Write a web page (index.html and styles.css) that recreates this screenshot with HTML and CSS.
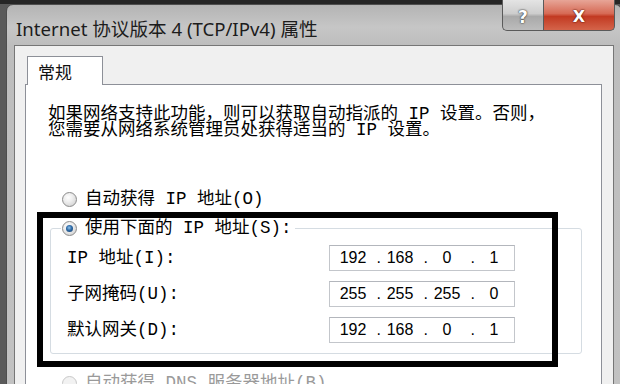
FILE: index.html
```html
<!DOCTYPE html>
<html lang="zh-CN">
<head>
  <meta charset="utf-8" />
  <title>Internet 协议版本 4 (TCP/IPv4) 属性</title>
  <link rel="stylesheet" href="styles.css">
</head>
<body>

  <div class="window">
    <!-- 标题栏 -->
    <div class="titlebar">
      <span class="title">Internet 协议版本 4 (TCP/IPv4) 属性</span>
      <div class="caption-buttons">
        <span class="btn-help">?</span>
        <span class="btn-close">X</span>
      </div>
    </div>

    <div class="client">
      <div class="tabs">
        <div class="tab">常规</div>
      </div>

      <div class="panel">
        <p class="intro">如果网络支持此功能，则可以获取自动指派的 IP 设置。否则，<br>您需要从网络系统管理员处获得适当的 IP 设置。</p>

        <div class="radio-row auto-ip">
          <span class="radio"></span>
          <span>自动获得 IP 地址(O)</span>
        </div>

        <fieldset class="group">
          <legend class="radio-row">
            <span class="radio checked"></span>
            <span>使用下面的 IP 地址(S):</span>
          </legend>
          <div class="rows">
            <span class="label">IP 地址(I):</span>
            <div class="ip-box">
              <span class="octet">192</span><span class="dot">.</span><span class="octet">168</span><span class="dot">.</span><span class="octet">0</span><span class="dot">.</span><span class="octet">1</span>
            </div>
            <span class="label">子网掩码(U):</span>
            <div class="ip-box">
              <span class="octet">255</span><span class="dot">.</span><span class="octet">255</span><span class="dot">.</span><span class="octet">255</span><span class="dot">.</span><span class="octet">0</span>
            </div>
            <span class="label">默认网关(D):</span>
            <div class="ip-box">
              <span class="octet">192</span><span class="dot">.</span><span class="octet">168</span><span class="dot">.</span><span class="octet">0</span><span class="dot">.</span><span class="octet">1</span>
            </div>
          </div>
        </fieldset>

        <div class="radio-row dns-auto">
          <span class="radio"></span>
          <span>自动获得 DNS 服务器地址(B)</span>
        </div>
      </div>
    </div>
  </div>

  <!-- 标注框 -->
  <div class="mark"></div>

</body>
</html>
```

FILE: styles.css
```css
body {
  margin: 0;
  height: 384px;
  overflow: hidden;
  background: linear-gradient(180deg, #262626 0, #262626 4px, #5a5a5a 4px);
  position: relative;
}

.window {
  margin: 4px 0 0 6px;
  width: 616px;
  height: 400px;
  box-sizing: border-box;
  padding: 0 7px;
  border: 1px solid #4e4e4e;
  border-radius: 7px 7px 0 0;
  background: linear-gradient(180deg, #b4b4b4 0, #c6c6c6 22px, #bdbdbd 40px, #c2c2c2 100%);
}

.titlebar {
  display: flex;
  justify-content: space-between;
  align-items: flex-start;
  height: 40px;
}

.title {
  padding: 13px 0 0 2px;
  font-family: "Noto Sans", "Noto Sans CJK SC", sans-serif;
  font-size: 18.6px;
  line-height: 22px;
  color: #1c1c1c;
}

.caption-buttons {
  display: flex;
  margin-top: -5px;
  margin-right: -1px;
}

.btn-help,
.btn-close {
  height: 31px;
  padding-top: 3px;
  box-sizing: border-box;
  display: flex;
  align-items: center;
  justify-content: center;
  font-family: "DejaVu Sans", sans-serif;
  font-weight: bold;
  color: #fff;
  border: 1px solid #5a5a5a;
  border-top: none;
}

.btn-help {
  width: 41px;
  font-size: 17px;
  border-right: none;
  border-radius: 0 0 0 5px;
  background: linear-gradient(180deg, #e4e4e4 0, #cdcdcd 45%, #a9a9a9 55%, #bdbdbd 100%);
  text-shadow: 0 0 2px #2e2e2e, 0 0 1px #2e2e2e;
}

.btn-close {
  width: 72px;
  font-size: 16px;
  border-radius: 0 0 5px 0;
  background: linear-gradient(180deg, #e7a597 0, #d66a55 45%, #c23a22 55%, #d4644a 100%);
  text-shadow: 0 0 2px #5a1408, 0 0 1px #5a1408;
}

.client {
  height: 360px;
  border: 1px solid #767676;
  background: #f0f0f0;
  padding-top: 10px;
  box-sizing: border-box;
}

.tabs {
  display: flex;
  padding-left: 12px;
}

.tab {
  width: 76px;
  height: 29px;
  box-sizing: border-box;
  margin-bottom: -1px;
  padding: 4px 0 0 10px;
  border: 1px solid #8d9098;
  border-bottom: none;
  background: #fff;
  position: relative;
  z-index: 1;
  font-family: "Noto Sans CJK SC", sans-serif;
  font-size: 17px;
  line-height: 22px;
  color: #111;
}

.panel {
  margin: 0 11px 0 10px;
  height: 320px;
  border: 1px solid #8d9098;
  background: #fff;
  padding-left: 22px;
  font-family: "Liberation Mono", "Noto Sans CJK SC", monospace;
  font-size: 17.5px;
  line-height: 16px;
  letter-spacing: 0;
  color: #000;
}

.intro {
  margin: 0;
  padding-top: 21px;
}

.radio-row {
  display: flex;
  align-items: center;
  gap: 8px;
  height: 16px;
}

.auto-ip {
  margin-top: 53px;
  margin-left: 14px;
}

.radio {
  width: 13px;
  height: 13px;
  border-radius: 50%;
  border: 1px solid #8b8b8b;
  background: radial-gradient(circle at 40% 35%, #ffffff 0, #ededed 40%, #c9c9c9 100%);
  display: flex;
  align-items: center;
  justify-content: center;
}

.radio.checked::after {
  content: "";
  width: 7px;
  height: 7px;
  border-radius: 50%;
  background: radial-gradient(circle at 45% 40%, #8fc3ee 0, #2f6aa5 45%, #123a66 100%);
}

.group {
  margin: 13px 0 0 2px;
  width: 532px;
  box-sizing: border-box;
  border: 1px solid #d5dce2;
  border-radius: 3px;
  padding: 9px 0 10px 16px;
}

.group legend {
  margin-left: -6px;
  padding: 0 3px 0 1px;
}

.rows {
  display: grid;
  grid-template-columns: 262px 186px;
  grid-auto-rows: 26px;
  row-gap: 10px;
  align-items: center;
}

.ip-box {
  height: 26px;
  box-sizing: border-box;
  border: 1px solid #c3c6cb;
  border-top-color: #b3b6bc;
  padding-left: 6px;
  display: flex;
  align-items: center;
  font-family: "Liberation Sans", sans-serif;
  font-size: 16px;
  letter-spacing: 0;
}

.octet {
  width: 34px;
  text-align: center;
}

.dot {
  width: 13px;
  text-align: right;
  padding-right: 2px;
  box-sizing: border-box;
}

.dns-auto {
  margin-top: 21px;
  margin-left: 14px;
  color: #9a9a9a;
}

.dns-auto .radio {
  border-color: #c8c8c8;
  background: #f2f2f2;
}

.mark {
  position: absolute;
  left: 37px;
  top: 212px;
  width: 521px;
  height: 155px;
  box-sizing: border-box;
  border: 6px solid #000;
}
```
